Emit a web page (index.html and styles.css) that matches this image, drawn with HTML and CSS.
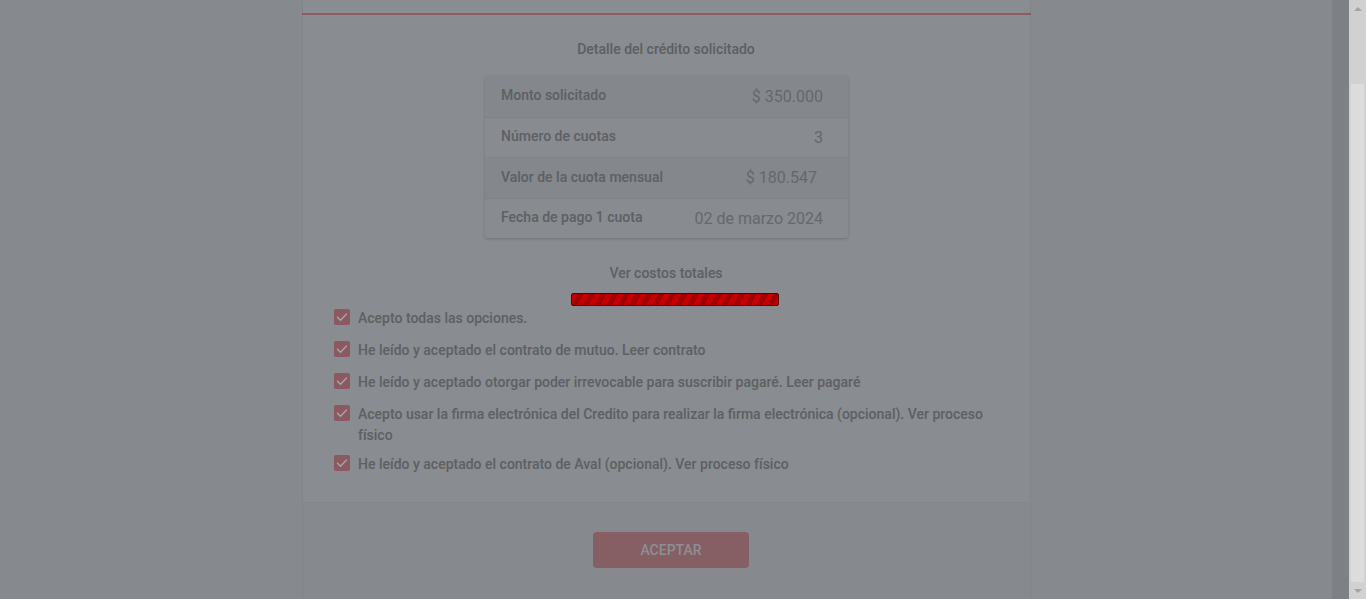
FILE: index.html
```html
<!DOCTYPE html>
<html lang="es">
<head>
<meta charset="utf-8">
<title>Detalle del crédito</title>
<link rel="stylesheet" href="styles.css">
</head>
<body>
<div class="app">
  <main class="main">
    <section class="card">
      <div class="card-top"></div>
      <div class="card-body">
        <h2 class="title">Detalle del crédito solicitado</h2>
        <div class="detail">
          <div class="row odd"><span class="label">Monto solicitado</span><span class="value">$ 350.000</span></div>
          <div class="row"><span class="label">Número de cuotas</span><span class="value">3</span></div>
          <div class="row odd"><span class="label">Valor de la cuota mensual</span><span class="value shift">$ 180.547</span></div>
          <div class="row"><span class="label">Fecha de pago 1 cuota</span><span class="value">02 de marzo 2024</span></div>
        </div>
        <div class="costs">Ver costos totales</div>
        <div class="progress"></div>
        <ul class="checks">
          <li class="check"><span class="box"><svg viewBox="0 0 16 16" width="16" height="16"><path d="M3.5 8.3l3 2.9 6-6.2" fill="none" stroke="#a7a2a6" stroke-width="1.5" stroke-linecap="round" stroke-linejoin="round"/></svg></span><span class="text">Acepto todas las opciones.</span></li>
          <li class="check"><span class="box"><svg viewBox="0 0 16 16" width="16" height="16"><path d="M3.5 8.3l3 2.9 6-6.2" fill="none" stroke="#a7a2a6" stroke-width="1.5" stroke-linecap="round" stroke-linejoin="round"/></svg></span><span class="text">He leído y aceptado el contrato de mutuo. Leer contrato</span></li>
          <li class="check"><span class="box"><svg viewBox="0 0 16 16" width="16" height="16"><path d="M3.5 8.3l3 2.9 6-6.2" fill="none" stroke="#a7a2a6" stroke-width="1.5" stroke-linecap="round" stroke-linejoin="round"/></svg></span><span class="text">He leído y aceptado otorgar poder irrevocable para suscribir pagaré. Leer pagaré</span></li>
          <li class="check"><span class="box"><svg viewBox="0 0 16 16" width="16" height="16"><path d="M3.5 8.3l3 2.9 6-6.2" fill="none" stroke="#a7a2a6" stroke-width="1.5" stroke-linecap="round" stroke-linejoin="round"/></svg></span><span class="text">Acepto usar la firma electrónica del Credito para realizar la firma electrónica (opcional). Ver proceso físico</span></li>
          <li class="check"><span class="box"><svg viewBox="0 0 16 16" width="16" height="16"><path d="M3.5 8.3l3 2.9 6-6.2" fill="none" stroke="#a7a2a6" stroke-width="1.5" stroke-linecap="round" stroke-linejoin="round"/></svg></span><span class="text">He leído y aceptado el contrato de Aval (opcional). Ver proceso físico</span></li>
        </ul>
      </div>
      <div class="card-footer">
        <button class="btn" type="button">ACEPTAR</button>
      </div>
    </section>
  </main>
  <div class="page-scroll"></div>
  <div class="scrollbar">
    <div class="arrow up"></div>
    <div class="track"><div class="thumb"></div></div>
    <div class="arrow down"></div>
  </div>
</div>
</body>
</html>
```

FILE: styles.css
```css
* { box-sizing: border-box; }
html, body { margin: 0; padding: 0; height: 100%; }
body {
  font-family: Roboto, "Liberation Sans", Arial, sans-serif;
  background: #86898d;
  overflow: hidden;
}
.app {
  display: flex;
  height: 599px;
}
.main {
  flex: 1;
  display: flex;
  justify-content: center;
  overflow: hidden;
  padding-left: 1px;
  background: #86898d;
}
.card {
  width: 729px;
  height: 100%;
  background: #898c90;
  border-left: 1px solid #818488;
  border-right: 1px solid #818488;
  display: flex;
  flex-direction: column;
}
.card-top {
  height: 15px;
  border-bottom: 2px solid #8d5a60;
  margin: 0 -1px;
}
.card-body {
  padding: 26px 32px 24px 31px;
  display: flex;
  flex-direction: column;
  align-items: center;
}
.title {
  margin: 0;
  font-size: 14px;
  line-height: 16px;
  font-weight: 500;
  color: #5c5f63;
}
.detail {
  margin-top: 19px;
  margin-left: 1px;
  width: 363px;
  box-shadow: 0 1px 3px rgba(0,0,0,0.18);
  border-radius: 3px;
  overflow: hidden;
}
.row {
  display: flex;
  justify-content: space-between;
  align-items: center;
  height: 40.5px;
  padding: 0 25px 0 16px;
  background: #888b8f;
  border-top: 1px solid #7f8286;
}
.row:first-child { border-top: none; }
.row.odd { background: #84878b; }
.label {
  font-size: 14px;
  font-weight: 500;
  color: #5d6064;
  margin-top: -2px;
}
.value {
  font-size: 16px;
  color: #65686c;
}
.value.shift { margin-right: 6px; }
.costs {
  margin-top: 27px;
  font-size: 14px;
  line-height: 16px;
  font-weight: 500;
  color: #5d6064;
}
.progress {
  margin: 12px 0 0 18px;
  width: 208px;
  height: 13px;
  border: 1px solid #5a0000;
  border-radius: 2px;
  background: repeating-linear-gradient(120deg, #c40000 0 5px, #a20000 5px 10px);
}
.checks {
  list-style: none;
  margin: 2px 0 0;
  padding: 0;
  align-self: stretch;
  display: flex;
  flex-direction: column;
  gap: 8px;
}
.check {
  display: flex;
  align-items: flex-start;
  gap: 8px;
  min-height: 24px;
}
.box {
  flex: none;
  width: 16px;
  height: 16px;
  margin-top: 1px;
  background: #8a5a60;
  border-radius: 2px;
  display: flex;
}
.text {
  font-size: 14px;
  line-height: 21px;
  font-weight: 500;
  color: #5d6064;
}
.card-footer {
  flex: 1;
  background: #86898d;
  border-top: 1px solid #83868a;
  display: flex;
  justify-content: center;
  align-items: flex-start;
  padding-top: 29px;
}
.btn {
  width: 156px;
  height: 36px;
  border: none;
  border-radius: 4px;
  background: #865f65;
  color: #8d8f93;
  font-family: inherit;
  font-size: 14px;
  font-weight: 500;
  margin-left: 9px;
}
.page-scroll {
  flex: none;
  width: 17px;
  background: #7d8084;
}
.scrollbar {
  flex: none;
  width: 17px;
  background: #d1d1d1;
  display: flex;
  flex-direction: column;
}
.arrow {
  height: 17px;
  display: flex;
  justify-content: center;
  align-items: center;
}
.arrow.up::before {
  content: "";
  border-left: 4px solid transparent;
  border-right: 4px solid transparent;
  border-bottom: 4px solid #a3a3a3;
}
.arrow.down::before {
  content: "";
  border-left: 4px solid transparent;
  border-right: 4px solid transparent;
  border-top: 4px solid #a3a3a3;
}
.track {
  flex: 1;
  padding: 67px 2px 0;
  display: flex;
  flex-direction: column;
}
.thumb {
  flex: 1;
  background: #dcdcdc;
}
```
